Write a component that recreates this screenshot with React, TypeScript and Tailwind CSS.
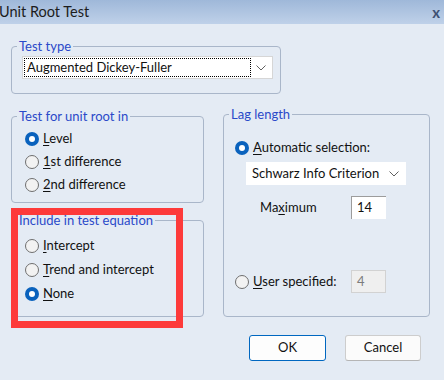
import React from 'react';

const font = { fontFamily: 'Lato, "Noto Sans", Arial, sans-serif' };

function Radio({ checked }: { checked?: boolean }) {
  return checked ? (
    <span className="flex h-[14px] w-[14px] shrink-0 items-center justify-center rounded-full bg-[#0a62bd]">
      <span className="h-[6px] w-[6px] rounded-full bg-white" />
    </span>
  ) : (
    <span className="h-[14px] w-[14px] shrink-0 rounded-full border border-[#6f6f6f] bg-[#f2f2f2]" />
  );
}

function Option({ checked, k, rest, h }: { checked?: boolean; k: string; rest: string; h: string }) {
  return (
    <div className={`flex items-center gap-[4px] ${h}`}>
      <Radio checked={checked} />
      <span className="whitespace-nowrap text-[13px] text-[#111]">
        <u className="underline-offset-2">{k}</u>
        {rest}
      </span>
    </div>
  );
}

function Chevron() {
  return (
    <svg width="10" height="6" viewBox="0 0 10 6" className="shrink-0">
      <path d="M0.5 0.5 L5 5 L9.5 0.5" fill="none" stroke="#606060" strokeWidth="1" />
    </svg>
  );
}

function Legend({ children }: { children: React.ReactNode }) {
  return (
    <legend className="ml-[5px] whitespace-nowrap px-[2px] text-[13px] leading-[16px] text-[#2a49c9]">{children}</legend>
  );
}

export default function App() {
  return (
    <div className="relative h-[380px] w-[444px] overflow-hidden bg-[#e4ebf4]" style={font}>
      {/* Title bar */}
      <div className="flex h-[24px] items-center justify-between bg-gradient-to-b from-[#9fb8d9] to-[#bfd1e9] pr-[4px]">
        <span className="-ml-[1px] whitespace-nowrap text-[14.5px] leading-none text-[#1c1c1c]">Unit Root Test</span>
        <span className="text-[15px] font-bold leading-none text-[#3e5072]">x</span>
      </div>

      {/* Test type */}
      <fieldset className="ml-[11px] mt-[14px] w-[270px] rounded-[4px] border border-[#a9b6c9]">
        <Legend>Test type</Legend>
        <div className="pb-[14px] pl-[10px] pt-[2px]">
          <div className="flex h-[23px] w-[251px] items-center justify-between border border-[#d6d6d6] bg-white pl-[1px] pr-[6px]">
            <div className="flex h-[19px] w-[227px] items-center whitespace-nowrap border border-dotted border-black pl-[2px] text-[13px] text-[#111]">
              Augmented Dickey-Fuller
            </div>
            <Chevron />
          </div>
        </div>
      </fieldset>

      <div className="mt-[12px] flex items-start">
        {/* Left column */}
        <div className="ml-[11px] flex w-[193px] flex-col gap-[9px] pt-[2px]">
          <fieldset className="rounded-[4px] border border-[#a9b6c9]">
            <Legend>Test for unit root in</Legend>
            <div className="pb-[6px] pl-[13px] pt-[3px]">
              <Option checked k="L" rest="evel" h="h-[23px]" />
              <Option k="1" rest="st difference" h="h-[23px]" />
              <Option k="2" rest="nd difference" h="h-[23px]" />
            </div>
          </fieldset>
          <fieldset className="rounded-[4px] border border-[#a9b6c9]">
            <Legend>Include in test equation</Legend>
            <div className="pb-[10px] pl-[13px] pt-[6px]">
              <Option k="I" rest="ntercept" h="h-[24px]" />
              <Option k="T" rest="rend and intercept" h="h-[24px]" />
              <Option checked k="N" rest="one" h="h-[24px]" />
            </div>
          </fieldset>
        </div>

        {/* Lag length */}
        <fieldset className="ml-[19px] h-[211px] w-[207px] rounded-[4px] border border-[#a9b6c9]">
          <Legend>Lag length</Legend>
          <div className="pl-[11px] pt-[15px]">
            <Option checked k="A" rest="utomatic selection:" h="h-[22px]" />
            <div className="ml-[11px] mt-[3px] flex h-[23px] w-[160px] items-center justify-between whitespace-nowrap bg-white pl-[6px] pr-[7px] text-[13px] text-[#111]">
              Schwarz Info Criterion
              <Chevron />
            </div>
            <div className="mt-[11px] flex items-center">
              <span className="ml-[25px] w-[91px] text-[13px] text-[#111]">
                Ma<u className="underline-offset-2">x</u>imum
              </span>
              <div className="flex h-[23px] w-[35px] items-center border-l border-t border-[#9c9c9c] bg-white pl-[5px] text-[13px] text-[#111]">
                14
              </div>
            </div>
            <div className="mt-[51px] flex items-center">
              <div className="w-[116px]">
                <Option k="U" rest="ser specified:" h="h-[23px]" />
              </div>
              <div className="flex h-[23px] w-[35px] items-center border border-[#d2d2d2] bg-[#efefef] pl-[5px] text-[13px] text-[#7c7c7c]">
                4
              </div>
            </div>
          </div>
        </fieldset>
      </div>

      {/* Buttons */}
      <div className="mt-[18px] flex justify-end gap-[19px] pr-[23px]">
        <button className="h-[26px] w-[77px] rounded-[3px] border border-[#0067c0] bg-[#fdfdfd] text-[13px] text-[#111]">
          OK
        </button>
        <button className="h-[26px] w-[76px] rounded-[3px] border border-[#cdcdcd] border-b-[#b5b5b5] bg-[#fbfbfb] text-[13px] text-[#111]">
          Cancel
        </button>
      </div>

      {/* Red annotation box */}
      <div className="pointer-events-none absolute left-[11px] top-[208px] h-[120px] w-[172px] border-[7px] border-[#fd3a3a]" />
    </div>
  );
}
